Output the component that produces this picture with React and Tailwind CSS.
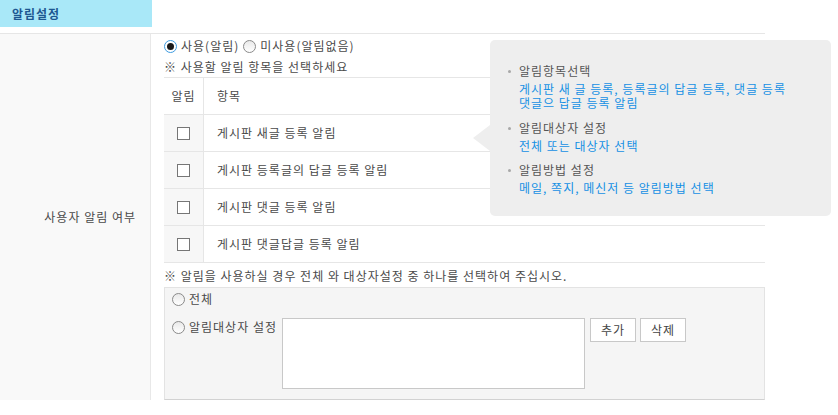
import React from 'react'

const ROWS = ['게시판 새글 등록 알림', '게시판 등록글의 답글 등록 알림', '게시판 댓글 등록 알림', '게시판 댓글답글 등록 알림']

function Radio({ checked = false }) {
  return checked ? (
    <span className="inline-flex w-[13px] h-[13px] rounded-full border border-[#3d9be0] bg-white items-center justify-center shrink-0">
      <span className="w-[7px] h-[7px] rounded-full bg-[#1a1a1a]" />
    </span>
  ) : (
    <span className="inline-block w-[13px] h-[13px] rounded-full border border-[#8a8a8a] bg-gradient-to-b from-[#e9e9e9] to-white shrink-0" />
  )
}

function Checkbox() {
  return <span className="inline-block w-[13px] h-[13px] border border-[#767676] bg-white" />
}

function Section({ title, children, className = '' }) {
  return (
    <div className={className}>
      <div className="flex items-center h-[14px] leading-[14px] text-[#555]">
        <span className="w-[3px] h-[3px] rounded-full bg-[#a8a8a8] ml-[18px] mr-[8px] mt-[1px]" />
        {title}
      </div>
      <div className="mt-[4px] pl-[29px] leading-[14px] text-[#1590e4]">{children}</div>
    </div>
  )
}

export default function App() {
  return (
    <div className="relative w-[838px] h-[415px] bg-white text-[12px] tracking-[1px] text-[#4a4a4a] font-[family-name:'Noto_Sans_CJK_KR','Noto_Sans',sans-serif]">
      {/* Title */}
      <div className="w-[152px] h-[27px] bg-[#a9e8f8] flex items-center pl-[12px] font-bold text-[#1d5791]">알림설정</div>

      {/* Form table */}
      <div className="mt-[6px] w-[765px] flex border-t border-[#e6e6e6]">
        <div className="w-[151px] shrink-0 bg-[#f9f9f9] border-r border-[#e8e8e8] flex items-center justify-end pr-[14px]">
          사용자 알림 여부
        </div>
        <div className="flex-1 pl-[13px] pt-[1px]">
          <div className="h-[22px] flex items-center gap-[4px]">
            <Radio checked />
            <span>사용(알림)</span>
            <Radio />
            <span>미사용(알림없음)</span>
          </div>
          <div className="h-[20px] flex items-center">※ 사용할 알림 항목을 선택하세요</div>

          {/* Item table */}
          <div className="border-t border-[#e6e6e6]">
            <div className="flex h-[37px] border-b border-[#e6e6e6]">
              <div className="w-[40px] border-r border-[#e6e6e6] flex items-center justify-center">알림</div>
              <div className="flex-1 flex items-center pl-[13px]">항목</div>
            </div>
            {ROWS.map((r) => (
              <div key={r} className="flex h-[37px] border-b border-[#e6e6e6]">
                <div className="w-[40px] bg-[#f7f7f7] border-r border-[#e6e6e6] flex items-center justify-center">
                  <Checkbox />
                </div>
                <div className="flex-1 flex items-center pl-[13px]">{r}</div>
              </div>
            ))}
          </div>

          <div className="h-[24px] flex items-center pt-[2px]">
            ※ 알림을 사용하실 경우 전체 와 대상자설정 중 하나를 선택하여 주십시오.
          </div>

          {/* Target box */}
          <div className="bg-[#f5f5f5] border border-[#e3e3e3] border-b-[#d2d2d2] pl-[7px] pt-[1px] pb-[10px]">
            <div className="h-[20px] flex items-center gap-[4px]">
              <Radio />
              <span>전체</span>
            </div>
            <div className="mt-[9px] flex items-start">
              <div className="w-[110px] shrink-0 h-[16px] flex items-center gap-[4px] mt-[1px]">
                <Radio />
                <span>알림대상자 설정</span>
              </div>
              <div className="w-[303px] h-[71px] bg-white border border-[#c8c8c8]" />
              <button className="ml-[5px] w-[46px] h-[24px] bg-white border border-[#c8c8c8] text-[#444]">추가</button>
              <button className="ml-[4px] w-[46px] h-[24px] bg-white border border-[#c8c8c8] text-[#444]">삭제</button>
            </div>
          </div>
        </div>
      </div>

      {/* Help tooltip */}
      <div className="absolute left-[490px] top-[40px] w-[341px] h-[176px] bg-[#eeeeee] rounded-[5px] pt-[24px]">
        <span className="absolute left-[-17px] top-[85px] w-0 h-0 border-y-[13px] border-y-transparent border-r-[17px] border-r-[#eeeeee]" />
        <Section title="알림항목선택">
          게시판 새 글 등록, 등록글의 답글 등록, 댓글 등록
          <br />
          댓글으 답글 등록 알림
        </Section>
        <Section title="알림대상자 설정" className="mt-[11px]">
          전체 또는 대상자 선택
        </Section>
        <Section title="알림방법 설정" className="mt-[10px]">
          메일, 쪽지, 메신저 등 알림방법 선택
        </Section>
      </div>
    </div>
  )
}
